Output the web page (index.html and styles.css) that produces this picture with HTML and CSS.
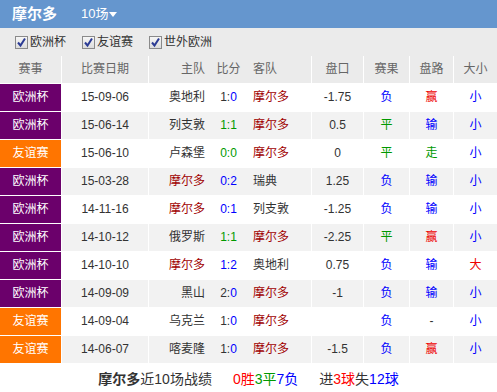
FILE: index.html
```html
<!DOCTYPE html>
<html lang="zh">
<head>
<meta charset="utf-8">
<link rel="stylesheet" href="styles.css">
</head>
<body>
<div class="panel">
  <div class="topbar">
    <span class="title">摩尔多</span>
    <span class="count">10场<i class="tri"></i></span>
  </div>
  <div class="filters">
    <label class="flt"><span class="cb"><svg viewBox="0 0 11 11" width="11" height="11"><path d="M2 5.5 L4.5 8.5 L9 1.5" fill="none" stroke="#2b3b94" stroke-width="2"/></svg></span>欧洲杯</label>
    <label class="flt"><span class="cb"><svg viewBox="0 0 11 11" width="11" height="11"><path d="M2 5.5 L4.5 8.5 L9 1.5" fill="none" stroke="#2b3b94" stroke-width="2"/></svg></span>友谊赛</label>
    <label class="flt"><span class="cb"><svg viewBox="0 0 11 11" width="11" height="11"><path d="M2 5.5 L4.5 8.5 L9 1.5" fill="none" stroke="#2b3b94" stroke-width="2"/></svg></span>世外欧洲</label>
  </div>
  <table class="grid">
    <thead>
      <tr>
        <th class="c1">赛事</th><th class="c2 bl">比赛日期</th><th class="c3 bl home">主队</th><th class="c4">比分</th><th class="c5 away">客队</th><th class="c6 bl">盘口</th><th class="c7 bl">赛果</th><th class="c8 bl">盘路</th><th class="c9 bl">大小</th>
      </tr>
    </thead>
    <tbody>
      <tr><td class="lg ec">欧洲杯</td><td class="bl">15-09-06</td><td class="bl home">奥地利</td><td><span class="dk">1:</span><span class="b">0</span></td><td class="away m">摩尔多</td><td class="bl">-1.75</td><td class="bl b">负</td><td class="bl r">赢</td><td class="bl b">小</td></tr>
      <tr><td class="lg ec">欧洲杯</td><td class="bl">15-06-14</td><td class="bl home">列支敦</td><td class="g">1:1</td><td class="away m">摩尔多</td><td class="bl">0.5</td><td class="bl g">平</td><td class="bl b">输</td><td class="bl b">小</td></tr>
      <tr><td class="lg fr">友谊赛</td><td class="bl">15-06-10</td><td class="bl home">卢森堡</td><td class="g">0:0</td><td class="away m">摩尔多</td><td class="bl">0</td><td class="bl g">平</td><td class="bl g">走</td><td class="bl b">小</td></tr>
      <tr><td class="lg ec">欧洲杯</td><td class="bl">15-03-28</td><td class="bl home m">摩尔多</td><td class="b">0:2</td><td class="away">瑞典</td><td class="bl">1.25</td><td class="bl b">负</td><td class="bl b">输</td><td class="bl b">小</td></tr>
      <tr><td class="lg ec">欧洲杯</td><td class="bl">14-11-16</td><td class="bl home m">摩尔多</td><td class="b">0:1</td><td class="away">列支敦</td><td class="bl">-1.25</td><td class="bl b">负</td><td class="bl b">输</td><td class="bl b">小</td></tr>
      <tr><td class="lg ec">欧洲杯</td><td class="bl">14-10-12</td><td class="bl home">俄罗斯</td><td class="g">1:1</td><td class="away m">摩尔多</td><td class="bl">-2.25</td><td class="bl g">平</td><td class="bl r">赢</td><td class="bl b">小</td></tr>
      <tr><td class="lg ec">欧洲杯</td><td class="bl">14-10-10</td><td class="bl home m">摩尔多</td><td class="b">1:2</td><td class="away">奥地利</td><td class="bl">0.75</td><td class="bl b">负</td><td class="bl b">输</td><td class="bl r">大</td></tr>
      <tr><td class="lg ec">欧洲杯</td><td class="bl">14-09-09</td><td class="bl home">黑山</td><td><span class="dk">2:</span><span class="b">0</span></td><td class="away m">摩尔多</td><td class="bl">-1</td><td class="bl b">负</td><td class="bl b">输</td><td class="bl b">小</td></tr>
      <tr><td class="lg fr">友谊赛</td><td class="bl">14-09-04</td><td class="bl home">乌克兰</td><td><span class="dk">1:</span><span class="b">0</span></td><td class="away m">摩尔多</td><td class="bl"></td><td class="bl b">负</td><td class="bl">-</td><td class="bl b">小</td></tr>
      <tr><td class="lg fr">友谊赛</td><td class="bl">14-06-07</td><td class="bl home">喀麦隆</td><td><span class="dk">1:</span><span class="b">0</span></td><td class="away m">摩尔多</td><td class="bl">-1.5</td><td class="bl b">负</td><td class="bl r">赢</td><td class="bl b">小</td></tr>
    </tbody>
  </table>
  <div class="summary">
    <b class="team">摩尔多</b>近10场战绩<span class="gap"></span><span class="r">0胜</span><span class="g">3平</span><span class="b">7负</span><span class="gap"></span>进<span class="r">3球</span>失<span class="b">12球</span>
  </div>
</div>
</body>
</html>
```
FILE: styles.css
```css
* { box-sizing: border-box; }
html, body { margin: 0; padding: 0; background: #fff; }
body {
  font-family: "Liberation Sans", "Noto Sans CJK SC", sans-serif;
  font-size: 12px;
  color: #333;
  width: 497px;
}
.topbar {
  height: 28px;
  background: #6596ce;
  color: #fff;
  display: flex;
  align-items: center;
  padding-left: 12px;
}
.title { font-size: 15px; font-weight: bold; line-height: 28px; }
.count {
  font-size: 13px;
  margin-left: 24px;
  display: flex;
  align-items: center;
  line-height: 28px;
}
.tri {
  display: inline-block;
  width: 0; height: 0;
  border-left: 4px solid transparent;
  border-right: 4px solid transparent;
  border-top: 5px solid #fff;
  margin-left: 1px;
  margin-top: 1px;
}
.filters {
  height: 28px;
  background: #ebebeb;
  display: flex;
  align-items: center;
  padding-left: 15px;
  gap: 16px;
}
.flt { display: flex; align-items: center; color: #333; line-height: 14px; }
.cb {
  width: 13px; height: 13px;
  border: 1px solid #8a8a8a;
  background: linear-gradient(#f6f6f6, #dcdcdc);
  margin-right: 2px;
  display: flex;
  align-items: center;
  justify-content: center;
}
.cb svg { display: block; }
.grid {
  width: 497px;
  table-layout: fixed;
  border-collapse: separate;
  border-spacing: 0;
}
.grid th, .grid td {
  padding: 0;
  height: 28px;
  border-bottom: 1px solid #fff;
  text-align: center;
  white-space: nowrap;
  overflow: hidden;
  line-height: 27px;
}
.grid th { background: #ebebeb; font-weight: normal; color: #666; }
.c1 { width: 61px; }
.c2 { width: 87px; }
.c3 { width: 63px; }
.c4 { width: 35px; }
.c5 { width: 65px; }
.c6 { width: 52px; }
.c7 { width: 46px; }
.c8 { width: 44px; }
.c9 { width: 44px; }
.grid .bl { border-left: 1px solid #fff; }
.grid .home { text-align: right; padding-right: 6px; }
.grid .away { text-align: left; padding-left: 7px; }
.grid tbody tr:nth-child(even) td { background: #f2f2f2; }
.grid tbody tr td.lg { color: #fff; }
.grid tbody tr td.lg.ec { background: #6b006b; }
.grid tbody tr td.lg.fr { background: #ff7500; }
.m { color: #a00000; }
.b { color: #0000ff; }
.g { color: #009900; }
.r { color: #ff0000; }
.dk { color: #333; }
.grid td.m { color: #a00000; }
.grid td.b { color: #0000ff; }
.grid td.g { color: #009900; }
.grid td.r { color: #ee0000; }
.summary {
  height: 28px;
  line-height: 30px;
  text-align: center;
  font-size: 14px;
  color: #333;
}
.team { font-weight: bold; }
.gap { display: inline-block; width: 21px; }
```
